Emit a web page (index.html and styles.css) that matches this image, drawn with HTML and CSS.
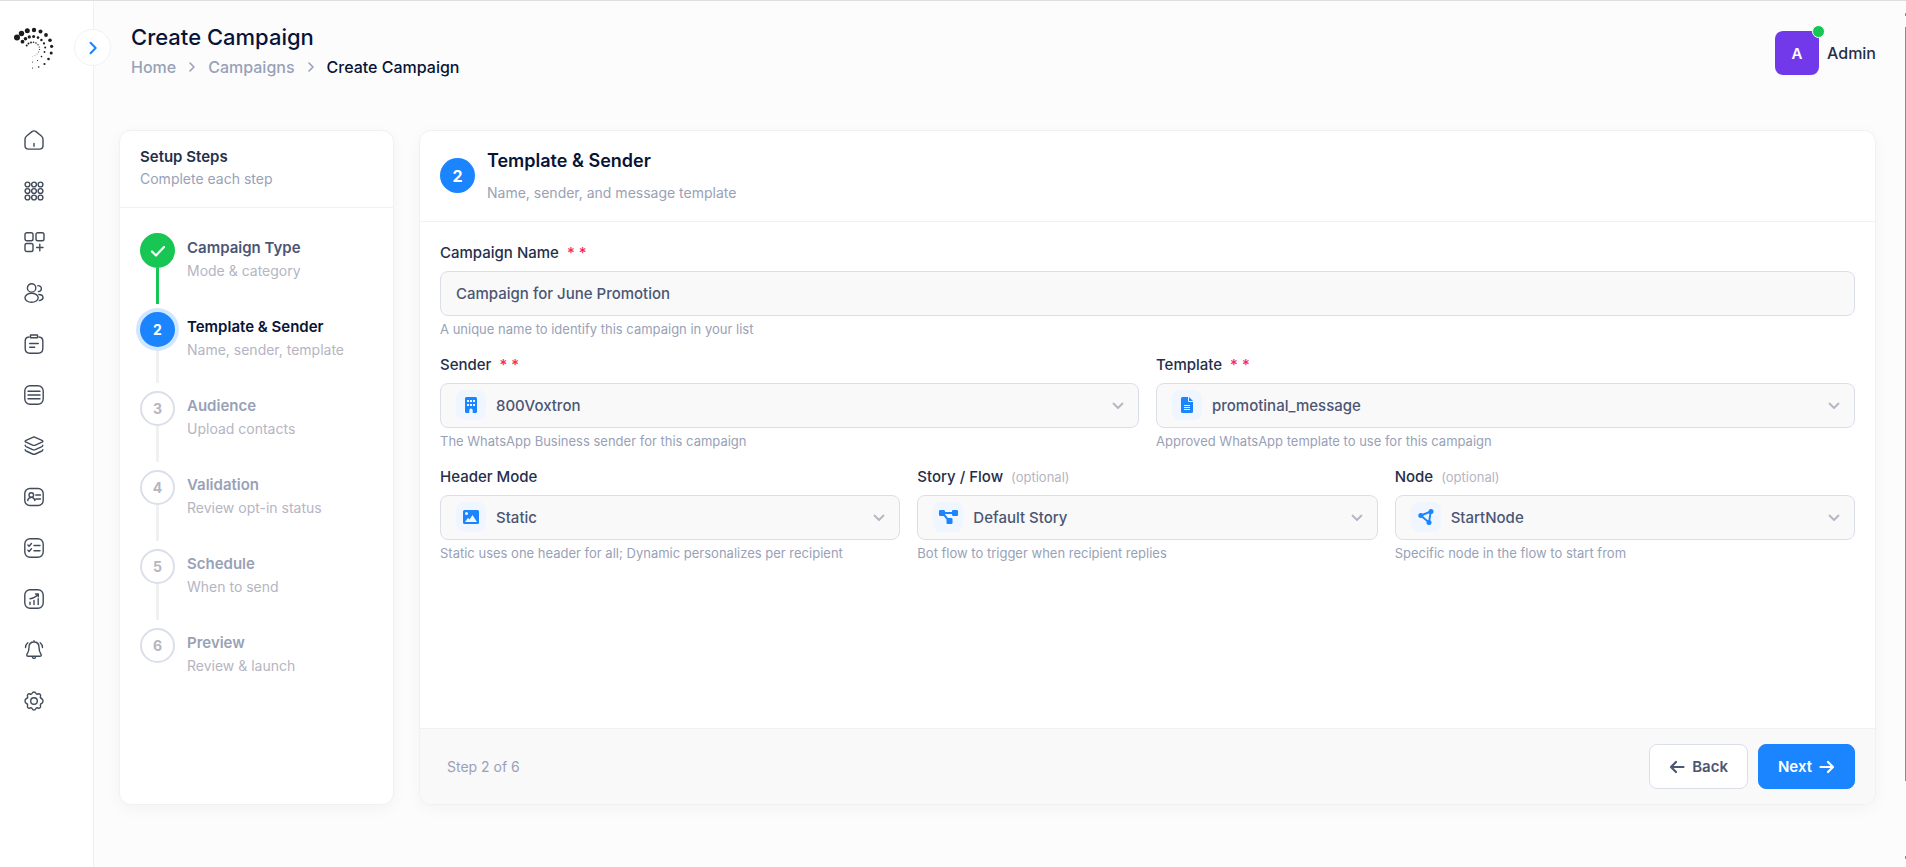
FILE: index.html
```html
<!DOCTYPE html>
<html lang="en">
<head>
<meta charset="utf-8">
<meta name="viewport" content="width=device-width, initial-scale=1">
<title>Create Campaign</title>
<link rel="stylesheet" href="styles.css">
</head>
<body>
<div class="app">
  <aside class="sidebar">
    <a class="logo" href="#" aria-label="Dashboard">
      <svg width="44" height="44" viewBox="12 26 44 44" fill="#1c1c1c">
        <circle cx="17" cy="37.5" r="3"/><circle cx="21.5" cy="33.5" r="2.7"/><circle cx="27.3" cy="30.7" r="2.5"/><circle cx="34" cy="30" r="2.2"/><circle cx="40.5" cy="31.6" r="2"/><circle cx="46" cy="35" r="1.9"/><circle cx="50" cy="40.2" r="1.8"/><circle cx="51.6" cy="46.3" r="1.6"/><circle cx="51.2" cy="53" r="1.5"/><circle cx="48.5" cy="59" r="1.3"/><circle cx="44.5" cy="64" r="1.1"/><circle cx="38.7" cy="67" r=".8"/><circle cx="32.5" cy="68" r=".6"/>
        <circle cx="22.5" cy="41.7" r="1.9"/><circle cx="25.5" cy="38.7" r="1.8"/><circle cx="29.3" cy="36.9" r="1.6"/><circle cx="33.6" cy="36.5" r="1.5"/><circle cx="38" cy="37.6" r="1.3"/><circle cx="41.4" cy="40" r="1.2"/><circle cx="44" cy="43.4" r="1.1"/><circle cx="45.2" cy="47.6" r="1"/><circle cx="44.5" cy="52" r=".9"/><circle cx="41.5" cy="56.6" r=".8"/><circle cx="37.5" cy="60.5" r=".6"/><circle cx="32.5" cy="62" r=".5"/>
        <circle cx="26.7" cy="45.5" r="1"/><circle cx="28.5" cy="43.5" r="1"/><circle cx="31" cy="42.5" r=".9"/><circle cx="33.5" cy="42.3" r=".8"/><circle cx="36" cy="43" r=".8"/><circle cx="38" cy="44.8" r=".7"/><circle cx="39.3" cy="47" r=".6"/><circle cx="39.5" cy="49.5" r=".6"/><circle cx="38.6" cy="52" r=".5"/><circle cx="37" cy="54" r=".4"/><circle cx="35" cy="55.7" r=".4"/><circle cx="32.5" cy="56.5" r=".3"/>
      </svg>
    </a>
    <button class="toggle" type="button" aria-label="Expand sidebar">
      <svg width="20" height="20" viewBox="0 0 20 20"><path d="M7.5 4.7 12.7 10 7.5 15.3"/></svg>
    </button>
    <nav class="menu" aria-label="Main">
      <a href="#" aria-label="Home"><svg viewBox="0 0 20 20"><path d="M1 9.2c0-1.3.5-2.4 1.6-3.200L8 1.600c1.200-.9 2.800-.9 4 0l5.400 4.400c1.100.8 1.600 1.900 1.600 3.200V15.500c0 2.300-1.300 3.600-3.600 3.600H4.600C2.300 19.100 1 17.800 1 15.500zM10 13.500v2.700"/></svg></a>
      <a href="#" aria-label="Apps"><svg viewBox="0 0 20 20"><g><circle cx="3.500" cy="3.500" r="2.400"/><circle cx="10" cy="3.500" r="2.400"/><circle cx="16.500" cy="3.500" r="2.400"/><circle cx="3.500" cy="10" r="2.400"/><circle cx="10" cy="10" r="2.400"/><circle cx="16.500" cy="10" r="2.400"/><circle cx="3.500" cy="16.500" r="2.400"/><circle cx="10" cy="16.500" r="2.400"/><circle cx="16.500" cy="16.500" r="2.400"/></g></svg></a>
      <a href="#" aria-label="Add widget"><svg viewBox="0 0 20 20"><rect x="1" y=".7" width="8" height="8" rx="1.800"/><rect x="12" y=".7" width="8" height="8" rx="1.800"/><rect x="1" y="11.500" width="8" height="8" rx="1.800"/><path d="M15.800 12.300v6.400M12.600 15.500H19"/></svg></a>
      <a href="#" aria-label="Contacts"><svg viewBox="0 0 20 20"><circle cx="7.600" cy="4.900" r="4.200"/><ellipse cx="7.600" cy="14.800" rx="6.600" ry="4.500"/><path d="M13.800 2.600c2.200-.1 3.600 1.300 3.600 3s-1.300 3-3.100 3M14.800 11.500c2.500.1 4.200 1.200 4.200 3s-1.300 2.700-3.600 3.100"/></svg></a>
      <a href="#" aria-label="Templates"><svg viewBox="0 0 20 20"><path d="M5 3C2.500 3.200 1.200 4.400 1.200 7v7.500c0 3.200 1.500 4.700 4.700 4.700h8.200c3.200 0 4.700-1.500 4.700-4.700V7c0-2.600-1.300-3.800-3.800-4M6.500 1h7v2.800h-7zM5.700 9.500h8.600M5.700 13.300h5"/></svg></a>
      <a href="#" aria-label="Lists"><svg viewBox="0 0 20 20"><rect x=".8" y=".8" width="18.400" height="18.400" rx="5.200"/><path d="M4 6.200h12M4 10h12M4 13.800h12"/></svg></a>
      <a href="#" aria-label="Campaigns"><svg viewBox="0 0 20 20"><path d="M10 .8 18 4.300c1.200.5 1.200 1.300 0 1.800l-6.600 3c-.9.400-1.900.4-2.800 0L2 6.100c-1.200-.5-1.200-1.300 0-1.800zM1.200 9.300c0 .7.300 1 .9 1.300l6.500 3c.9.400 1.900.4 2.800 0l6.500-3c.6-.3.900-.6.900-1.300M1.200 13.700c0 .7.300 1 .9 1.300l6.500 3c.9.400 1.900.4 2.800 0l6.500-3c.6-.3.900-.6.900-1.300"/></svg></a>
      <a href="#" aria-label="Profiles"><svg viewBox="0 0 20 20"><rect x=".8" y="1.500" width="18.400" height="17" rx="5"/><circle cx="7.300" cy="8" r="2.300"/><path d="M3.700 13.500c.4-2 1.800-3.100 3.600-3.100s3.200 1.100 3.600 3.100M11.800 8h4.700M11.800 12h4.700"/></svg></a>
      <a href="#" aria-label="Tasks"><svg viewBox="0 0 20 20"><rect x=".8" y=".8" width="18.400" height="18.400" rx="5.200"/><path d="m3.900 7 1.200 1.200 2.400-2.700M3.900 12.300l1.200 1.200 2.400-2.700M10 7.500h6M10 12.800h6"/></svg></a>
      <a href="#" aria-label="Reports"><svg viewBox="0 0 20 20"><rect x=".8" y=".8" width="18.400" height="18.400" rx="5.200"/><path d="M6 15.500v-2.200M10 15.500v-4M14.200 15.500V9.600M6 9.800c3.200-.3 5.800-1.800 8-4.500M11.500 5h2.800v2.700"/></svg></a>
      <a href="#" aria-label="Notifications"><svg viewBox="0 0 20 20"><path d="M10 2c-3.200 0-5 2.300-5 5.200 0 3.600-.6 4.900-1.800 6.700-.9 1.400-.3 2.300 1 2.300h11.600c1.300 0 1.900-.9 1-2.300C15.600 12.100 15 10.800 15 7.200 15 4.300 13.200 2 10 2zM10 .7V2M8.200 16.500c.2 1.400.9 2 1.800 2s1.600-.6 1.800-2M3.800 2.700C2.400 3.800 1.600 5.500 1.500 7.500M16.200 2.700c1.400 1.100 2.200 2.800 2.300 4.800"/></svg></a>
      <a href="#" aria-label="Settings"><svg viewBox="0 0 20 20"><circle cx="10" cy="10" r="3.300"/><path d="M8.300 2.100c.5-1.500 2.900-1.500 3.400 0 .4 1 1.300 1.400 2.300.9 1.600-.7 3 .7 2.500 2.200-.4 1 0 1.900 1 2.300 2 .8 2 4.200 0 5-1 .4-1.400 1.300-1 2.300.5 1.500-.9 2.900-2.500 2.200-1-.5-1.900-.1-2.300.9-.5 1.500-2.900 1.500-3.400 0-.4-1-1.300-1.400-2.300-.9-1.600.7-3-.7-2.500-2.200.4-1 0-1.900-1-2.300-2-.8-2-4.200 0-5 1-.4 1.400-1.300 1-2.300C3 3.700 4.400 2.300 6 3c1 .5 1.900.1 2.300-.9z"/></svg></a>
    </nav>
  </aside>

  <main class="main">
    <header class="topbar">
      <div>
        <h1 class="page-title">Create Campaign</h1>
        <nav class="crumbs" aria-label="Breadcrumb">
          <a href="#">Home</a>
          <svg width="8" height="12" viewBox="0 0 8 12"><path d="M2 2l4 4-4 4"/></svg>
          <a href="#">Campaigns</a>
          <svg width="8" height="12" viewBox="0 0 8 12"><path d="M2 2l4 4-4 4"/></svg>
          <span class="current">Create Campaign</span>
        </nav>
      </div>
      <div class="user">
        <div class="avatar">A<span class="status"></span></div>
        <span>Admin</span>
      </div>
    </header>

    <div class="content">
      <section class="card steps">
        <header class="steps-head">
          <h2>Setup Steps</h2>
          <p>Complete each step</p>
        </header>
        <ol class="step-list">
          <li class="step done">
            <span class="dot"><svg width="16" height="14" viewBox="0 0 16 14"><path d="M2 7.500l4 4L14 3"/></svg></span>
            <div><h3>Campaign Type</h3><p>Mode &amp; category</p></div>
          </li>
          <li class="step active">
            <span class="dot">2</span>
            <div><h3>Template &amp; Sender</h3><p>Name, sender, template</p></div>
          </li>
          <li class="step"><span class="dot">3</span><div><h3>Audience</h3><p>Upload contacts</p></div></li>
          <li class="step"><span class="dot">4</span><div><h3>Validation</h3><p>Review opt-in status</p></div></li>
          <li class="step"><span class="dot">5</span><div><h3>Schedule</h3><p>When to send</p></div></li>
          <li class="step"><span class="dot">6</span><div><h3>Preview</h3><p>Review &amp; launch</p></div></li>
        </ol>
      </section>

      <form class="card panel">
        <header class="panel-head">
          <span class="badge">2</span>
          <div>
            <h2>Template &amp; Sender</h2>
            <p>Name, sender, and message template</p>
          </div>
        </header>

        <div class="panel-body">
          <div class="row">
            <div class="field">
              <label for="name">Campaign Name <span class="req">*</span><span class="req">*</span></label>
              <input class="control" id="name" type="text" value="Campaign for June Promotion">
              <p class="hint">A unique name to identify this campaign in your list</p>
            </div>
          </div>

          <div class="row">
            <div class="field">
              <label for="sender">Sender <span class="req">*</span><span class="req">*</span></label>
              <div class="picker">
                <span class="icon"><svg width="16" height="16" viewBox="0 0 16 16"><path fill-rule="evenodd" d="M3.500 0h9A1.500 1.500 0 0 1 14 1.500v13a1.500 1.500 0 0 1-1.500 1.500H9.700v-2.700a1.700 1.700 0 0 0-3.400 0V16H3.500A1.500 1.500 0 0 1 2 14.500v-13A1.500 1.500 0 0 1 3.500 0zM4 3v2h2V3zm3 0v2h2V3zm3 0v2h2V3zM4 7v2h2V7zm3 0v2h2V7zm3 0v2h2V7z"/></svg></span>
                <select class="control" id="sender"><option>800Voxtron</option></select>
                <svg class="caret" width="12" height="8" viewBox="0 0 12 8"><path d="M1.500 1.500 6 6l4.500-4.500"/></svg>
              </div>
              <p class="hint">The WhatsApp Business sender for this campaign</p>
            </div>
            <div class="field">
              <label for="template">Template <span class="req">*</span><span class="req">*</span></label>
              <div class="picker">
                <span class="icon"><svg width="16" height="16" viewBox="0 0 16 16"><path fill-rule="evenodd" d="M3.500 0H9v4a1 1 0 0 0 1 1h4v9.500a1.500 1.500 0 0 1-1.500 1.500h-9A1.500 1.500 0 0 1 2 14.500v-13A1.500 1.500 0 0 1 3.500 0zM10 0l4 4h-4zM5 8v1h6V8zm0 2v1h6v-1zm0 2v1h6v-1z"/></svg></span>
                <select class="control" id="template"><option>promotinal_message</option></select>
                <svg class="caret" width="12" height="8" viewBox="0 0 12 8"><path d="M1.500 1.500 6 6l4.500-4.500"/></svg>
              </div>
              <p class="hint">Approved WhatsApp template to use for this campaign</p>
            </div>
          </div>

          <div class="row">
            <div class="field">
              <label for="mode">Header Mode</label>
              <div class="picker">
                <span class="icon"><svg width="16" height="16" viewBox="0 0 16 16"><path fill-rule="evenodd" d="M1.500 1h13A1.500 1.500 0 0 1 16 2.500v11a1.500 1.500 0 0 1-1.500 1.500h-13A1.500 1.500 0 0 1 0 13.500v-11A1.500 1.500 0 0 1 1.500 1zm2 2a1.500 1.500 0 1 0 0 3 1.500 1.500 0 0 0 0-3zm6 3L6.500 10.400 5 8.800 2 13h12z"/></svg></span>
                <select class="control" id="mode"><option>Static</option></select>
                <svg class="caret" width="12" height="8" viewBox="0 0 12 8"><path d="M1.500 1.500 6 6l4.500-4.500"/></svg>
              </div>
              <p class="hint">Static uses one header for all; Dynamic personalizes per recipient</p>
            </div>
            <div class="field">
              <label for="story">Story / Flow <span class="opt">(optional)</span></label>
              <div class="picker">
                <span class="icon"><svg width="19" height="16" viewBox="0 0 19 16"><path d="M1.300 1h3.400A1.300 1.300 0 0 1 6 2.300V3h7v-.7A1.300 1.300 0 0 1 14.300 1h3.400A1.300 1.300 0 0 1 19 2.300v3.400A1.300 1.300 0 0 1 17.700 7h-3.400A1.300 1.300 0 0 1 13 5.700V5H6v.2L8.900 9h3.300a1.300 1.300 0 0 1 1.300 1.300v3.400a1.300 1.300 0 0 1-1.300 1.300H8.800a1.300 1.300 0 0 1-1.300-1.300v-3.200L4.800 7H1.300A1.300 1.300 0 0 1 0 5.700V2.300A1.300 1.300 0 0 1 1.300 1z"/></svg></span>
                <select class="control" id="story"><option>Default Story</option></select>
                <svg class="caret" width="12" height="8" viewBox="0 0 12 8"><path d="M1.500 1.500 6 6l4.500-4.500"/></svg>
              </div>
              <p class="hint">Bot flow to trigger when recipient replies</p>
            </div>
            <div class="field">
              <label for="node">Node <span class="opt">(optional)</span></label>
              <div class="picker">
                <span class="icon"><svg width="16" height="16" viewBox="0 0 16 16"><path d="M2.800 6.500 12.800 2.500 11 13.500z" fill="none" stroke="#1b84ff" stroke-width="1.900"/><circle cx="2.800" cy="6.500" r="2.500"/><circle cx="13" cy="2.500" r="2.500"/><circle cx="11" cy="13.500" r="2.500"/></svg></span>
                <select class="control" id="node"><option>StartNode</option></select>
                <svg class="caret" width="12" height="8" viewBox="0 0 12 8"><path d="M1.500 1.500 6 6l4.500-4.500"/></svg>
              </div>
              <p class="hint">Specific node in the flow to start from</p>
            </div>
          </div>
        </div>

        <footer class="panel-foot">
          <span class="progress">Step 2 of 6</span>
          <button class="btn" type="button"><svg width="16" height="14" viewBox="0 0 16 14"><path d="M7 2 2 7l5 5M2 7h12.500"/></svg>Back</button>
          <button class="btn primary" type="submit">Next<svg width="16" height="14" viewBox="0 0 16 14"><path d="m9 2 5 5-5 5M14 7H1.500"/></svg></button>
        </footer>
      </form>
    </div>
  </main>
  <div class="scroll-edge"></div>
</div>
</body>
</html>
```

FILE: styles.css
```css
* { box-sizing: border-box; }

body {
  margin: 0;
  font-family: Inter, "Liberation Sans", sans-serif;
  font-size: 15px;
  color: #252f4a;
  background: #fcfcfc;
}

h1, h2, h3, p, ol { margin: 0; padding: 0; }
a { text-decoration: none; color: inherit; }

.app {
  position: relative;
  display: flex;
  min-height: 100vh;
  border-top: 1px solid #dedede;
}

/* Sidebar */
.sidebar {
  position: relative;
  flex: none;
  width: 94px;
  padding: 25px 12px;
  background: #fff;
  border-right: 1px solid #f1f1f2;
}
.logo { display: block; height: 44px; }
.toggle {
  position: absolute;
  top: 28px;
  right: -18px;
  display: grid;
  place-items: center;
  width: 37px;
  height: 37px;
  padding: 0;
  border: 1px solid #f1f1f4;
  border-radius: 50%;
  background: #fff;
}
.toggle path { fill: none; stroke: #1b84ff; stroke-width: 2; stroke-linecap: round; stroke-linejoin: round; }
.menu {
  display: grid;
  gap: 31px;
  margin-top: 60px;
  padding-left: 12px;
}
.menu a { height: 20px; }
.menu svg {
  display: block;
  width: 20px;
  height: 20px;
  fill: none;
  stroke: #414b5a;
  stroke-width: 1.4;
  stroke-linecap: round;
  stroke-linejoin: round;
  overflow: visible;
}

/* Top bar */
.main {
  flex: 1;
  display: flex;
  flex-direction: column;
  min-width: 0;
  padding: 22px 30px 62px 25px;
}
.topbar {
  display: flex;
  justify-content: space-between;
  align-items: flex-start;
  height: 107px;
  padding-left: 12px;
}
.page-title {
  font-size: 22px;
  line-height: 28px;
  font-weight: 500;
  color: #071437;
}
.crumbs {
  display: flex;
  align-items: center;
  gap: 12px;
  margin-top: 4px;
  font-size: 16px;
  line-height: 24px;
  font-weight: 500;
  color: #99a1b7;
}
.crumbs svg { fill: none; stroke: #99a1b7; stroke-width: 1.6; stroke-linecap: round; stroke-linejoin: round; }
.current { color: #071437; }
.user {
  display: flex;
  align-items: center;
  gap: 8px;
  margin-top: 8px;
  font-size: 16px;
  font-weight: 500;
}
.avatar {
  position: relative;
  display: grid;
  place-items: center;
  width: 44px;
  height: 44px;
  border-radius: 8px;
  background: #7239ea;
  color: #fff;
  font-size: 15px;
  font-weight: 600;
}
.status {
  position: absolute;
  top: -6px;
  right: -6px;
  width: 13px;
  height: 13px;
  border: 1px solid #fff;
  border-radius: 50%;
  background: #17c653;
}

/* Cards */
.content {
  flex: 1;
  display: grid;
  grid-template-columns: 275px minmax(0, 1fr);
  gap: 25px;
}
.card {
  overflow: hidden;
  background: #fff;
  border: 1px solid #f1f1f4;
  border-radius: 12px;
  box-shadow: 0 4px 16px rgba(0, 0, 0, .04);
}

/* Step list */
.steps-head {
  padding: 15px 20px 17px;
  border-bottom: 1px solid #f1f1f2;
}
.steps-head h2 {
  font-size: 15px;
  line-height: 22px;
  font-weight: 600;
}
.steps-head p {
  font-size: 14px;
  line-height: 22px;
  color: #99a1b7;
}
.step-list {
  list-style: none;
  padding: 25px 20px;
}
.step {
  position: relative;
  display: flex;
  gap: 12px;
  height: 79px;
}
.step:last-child { height: auto; }
.step:not(:last-child)::after {
  content: "";
  position: absolute;
  top: 35px;
  left: 16px;
  width: 3px;
  height: 36px;
  background: #f1f1f2;
}
.step.done::after { background: #17c653 !important; }
.dot, .badge {
  z-index: 1;
  flex: none;
  display: grid;
  place-items: center;
  width: 35px;
  height: 35px;
  border-radius: 50%;
  font-size: 14px;
  font-weight: 700;
}
.dot {
  border: 2px solid #dbdfe9;
  background: #fff;
  color: #b5b5c3;
}
.done .dot { background: #17c653; border-color: #17c653; }
.dot path { fill: none; stroke: #fff; stroke-width: 2.2; stroke-linecap: round; stroke-linejoin: round; }
.active .dot, .badge {
  border-color: #1b84ff;
  background: #1b84ff;
  color: #fff;
}
.active .dot { box-shadow: 0 0 0 4px #d1e6ff; }
.badge { font-size: 16px; }
.step h3 {
  margin-top: 4px;
  font-size: 15px;
  line-height: 22px;
  font-weight: 600;
  color: #99a1b7;
}
.step p {
  margin-top: 2px;
  font-size: 14px;
  line-height: 20px;
  color: #b5b5c3;
}
.step.done h3 { color: #4b5675; }
.step.active h3 { color: #071437; }

/* Form panel */
.panel { display: flex; flex-direction: column; }
.panel-head {
  display: flex;
  align-items: center;
  gap: 12px;
  padding: 15px 20px 16px;
  border-bottom: 1px solid #f1f1f2;
}
.panel-head h2 {
  font-size: 18px;
  line-height: 30px;
  font-weight: 600;
  color: #071437;
}
.panel-head p {
  margin-top: 5px;
  font-size: 14px;
  line-height: 24px;
  color: #99a1b7;
}
.panel-body {
  flex: 1;
  display: flex;
  flex-direction: column;
  gap: 16px;
  padding: 20px;
}
.row {
  display: grid;
  grid-auto-flow: column;
  grid-auto-columns: minmax(0, 1fr);
  gap: 17px;
}
.field label {
  display: block;
  margin-bottom: 7px;
  font-size: 15px;
  line-height: 22px;
  font-weight: 500;
}
.req { margin-left: 4px; color: #f8285a; }
.opt { margin-left: 4px; font-size: 13px; line-height: 16px; font-weight: 400; color: #b5b5c3; }
.control {
  display: block;
  width: 100%;
  height: 45px;
  padding: 0 15px;
  border: 1px solid #dbdfe9;
  border-radius: 8px;
  background: #f9f9f9;
  color: #4b5675;
  font: inherit;
  font-weight: 500;
  appearance: none;
}
.picker { position: relative; }
.picker .control { padding-left: 55px; }
.icon {
  position: absolute;
  top: 7px;
  left: 16px;
  display: grid;
  place-items: center;
  width: 30px;
  height: 30px;
  border-radius: 8px;
  background: #eff6ff;
}
.icon svg { fill: #1b84ff; }
.caret {
  position: absolute;
  top: 19px;
  right: 15px;
  fill: none;
  stroke: #b5b5c3;
  stroke-width: 1.8;
  stroke-linecap: round;
  stroke-linejoin: round;
}
.hint {
  margin-top: 4px;
  font-size: 13px;
  line-height: 18px;
  color: #99a1b7;
}
.panel-foot {
  display: flex;
  align-items: center;
  gap: 10px;
  padding: 15px 20px;
  border-top: 1px solid #f1f1f2;
  background: #f9f9f9;
}
.progress {
  margin: 0 auto 0 7px;
  font-size: 14px;
  color: #99a1b7;
}
.btn {
  display: flex;
  align-items: center;
  gap: 7px;
  height: 45px;
  padding: 0 19px;
  border: 1px solid #dbdfe9;
  border-radius: 8px;
  background: #fff;
  color: #4b5675;
  font: inherit;
  font-weight: 600;
}
.btn.primary { border-color: #1b84ff; background: #1b84ff; color: #fff; }
.btn path { fill: none; stroke: currentColor; stroke-width: 2.200; stroke-linecap: round; stroke-linejoin: round; }

/* Scroll indicator on the window edge */
.scroll-edge {
  position: absolute;
  top: 26px;
  right: 0;
  bottom: 86px;
  width: 1px;
  background: #8b8b8b;
}
.scroll-edge::before,
.scroll-edge::after {
  content: "";
  position: absolute;
  right: 0;
  width: 1px;
  height: 3px;
  background: #8b8b8b;
}
.scroll-edge::before { top: -14px; }
.scroll-edge::after { bottom: -78px; }
```
